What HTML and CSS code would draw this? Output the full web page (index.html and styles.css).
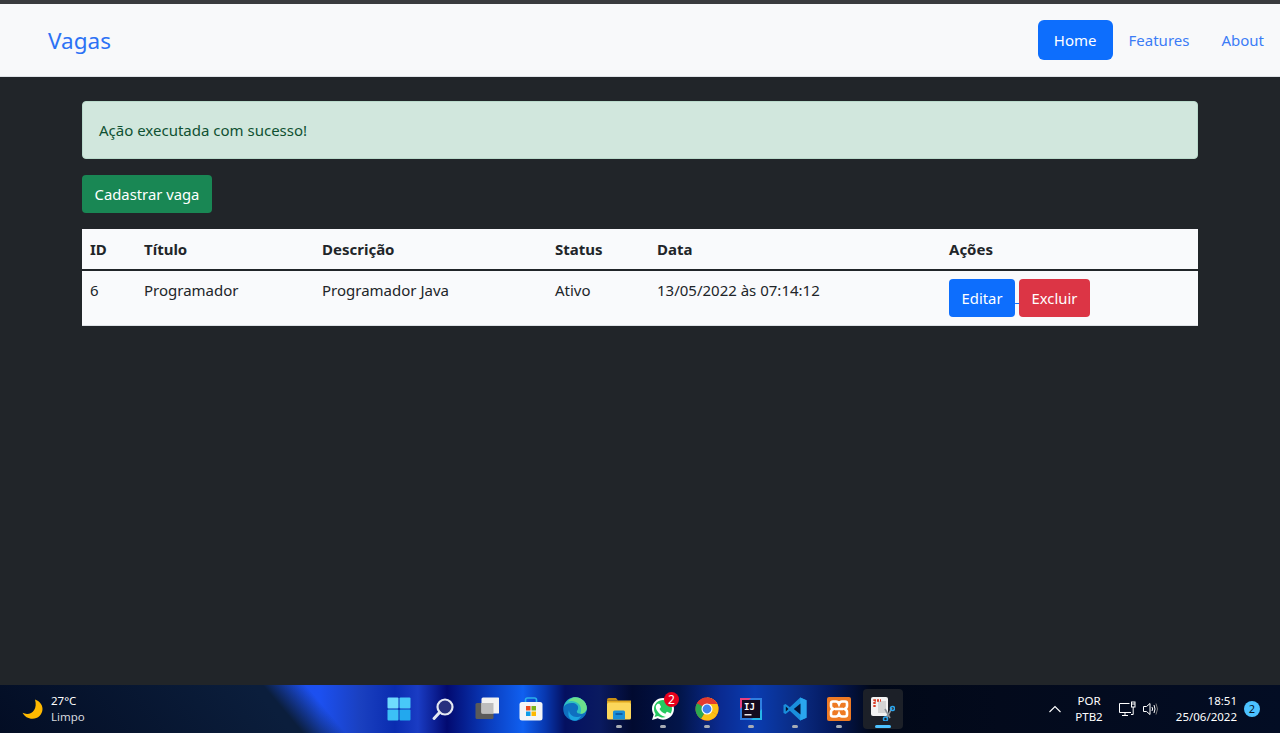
FILE: index.html
```html
<!DOCTYPE html>
<html lang="en">
<head>
  <meta charset="UTF-8" />
  <meta name="viewport" content="width=device-width, initial-scale=1.0">
  <title>Vagas</title>
  <link rel="stylesheet" href="styles.css">
</head>
<body>

<div class="page">
  <!-- Navbar -->
  <nav class="navbar">
    <a class="brand" href="#">Vagas</a>
    <ul class="nav">
      <li><a class="nav-link active" href="#">Home</a></li>
      <li><a class="nav-link" href="#">Features</a></li>
      <li><a class="nav-link" href="#">About</a></li>
    </ul>
  </nav>

  <!-- Content -->
  <main class="container">
    <div class="alert">Ação executada com sucesso!</div>
    <a href="#"><button class="btn btn-success">Cadastrar vaga</button></a>

    <table class="table">
      <colgroup>
        <col class="col-id"><col class="col-title"><col class="col-desc">
        <col class="col-status"><col class="col-date"><col class="col-actions">
      </colgroup>
      <thead>
        <tr>
          <th>ID</th>
          <th>Título</th>
          <th>Descrição</th>
          <th>Status</th>
          <th>Data</th>
          <th>Ações</th>
        </tr>
      </thead>
      <tbody>
        <tr>
          <td>6</td>
          <td>Programador</td>
          <td>Programador Java</td>
          <td>Ativo</td>
          <td>13/05/2022 às 07:14:12</td>
          <td class="cell-actions">
            <a href="#"><button class="btn btn-primary">Editar</button> </a><a href="#"><button class="btn btn-danger">Excluir</button></a>
          </td>
        </tr>
      </tbody>
    </table>
  </main>
</div>

<!-- Taskbar -->
<footer class="taskbar">
  <div class="weather">
    <svg width="24" height="24" viewBox="0 0 24 24">
      <path d="M15 2.500c4.500 1.500 7.500 5 7.500 9.500 0 5.500-4.500 9.800-10 9.800-4.500 0-8-2.300-10-6 1.500.8 3 1.100 4.500 1.100 6 0 10.500-5.500 8-14.400z" fill="#ffb900"/>
    </svg>
    <div class="weather-text">
      <span class="temp">27°C</span>
      <span class="cond">Limpo</span>
    </div>
  </div>

  <div class="apps">
    <div class="app">
      <svg width="24" height="24" viewBox="0 0 24 24">
        <rect x="0.500" y="0.500" width="11" height="11" rx="1" fill="#6fdcfd"/>
        <rect x="12.500" y="0.500" width="11" height="11" rx="1" fill="#48c8f8"/>
        <rect x="0.500" y="12.500" width="11" height="11" rx="1" fill="#3cc0f6"/>
        <rect x="12.500" y="12.500" width="11" height="11" rx="1" fill="#22a8ee"/>
      </svg>
    </div>
    <div class="app">
      <svg width="24" height="24" viewBox="0 0 24 24" fill="none">
        <circle cx="14" cy="10" r="7.500" stroke="#e4e8f2" stroke-width="2.200" fill="#27307e"/>
        <path d="M8.500 15.500L3 21.500" stroke="#e4e8f2" stroke-width="3" stroke-linecap="round"/>
      </svg>
    </div>
    <div class="app">
      <svg width="24" height="24" viewBox="0 0 24 24">
        <rect x="0.500" y="6" width="18" height="16" rx="1.500" fill="#5a5a5a"/>
        <rect x="6.500" y="0.500" width="18" height="16" rx="1.500" fill="#f2f2f2"/>
        <rect x="6.500" y="6" width="12" height="10.500" fill="#bdbdbd"/>
      </svg>
    </div>
    <div class="app">
      <svg width="24" height="24" viewBox="0 0 24 24" fill="none">
        <path d="M6.500 6V3Q6.500 1 8.500 1H15.500Q17.500 1 17.500 3V6" stroke="#2ab0ea" stroke-width="1.600"/>
        <rect x="0.500" y="5" width="23" height="18.500" rx="2.500" fill="#f4f5f7"/>
        <rect x="7" y="9" width="4.500" height="4.500" fill="#ea4a1f"/>
        <rect x="12.500" y="9" width="4.500" height="4.500" fill="#7cb518"/>
        <rect x="7" y="14.500" width="4.500" height="4.500" fill="#0f9de8"/>
        <rect x="12.500" y="14.500" width="4.500" height="4.500" fill="#fdb900"/>
      </svg>
    </div>
    <div class="app">
      <svg width="24" height="24" viewBox="0 0 24 24">
        <circle cx="12" cy="12" r="11.800" fill="#0f6fc0"/>
        <path d="M0.800 10C2 3.800 7 .2 12 .2c6.500 0 11.800 5 11.800 10.800 0 3.500-3 5.800-6.500 5.800-2 0-3.500-.8-3.500-2 0-1.500 1.300-1.300 1.300-3.500C15.500 8 12.500 6 9 6 5 6 2 7.500 .8 10z" fill="#2fc0c0"/>
        <path d="M12 .2c6.500 0 11.800 5 11.800 10.800 0 3.500-3 5.800-6.500 5.800 1.500-3 1-7.500-2-10.300C12.800 4 8 3.200 5 4.500 7 1.800 9.500 .2 12 .2z" fill="#6be08c"/>
        <path d="M6 13c0 4 3.500 7 7.500 7 2 0 3.500-.5 5-1.500-1.800 3-4.300 5.300-6.500 5.300-5 0-8-5-6-10.800z" fill="#1ba3e0"/>
      </svg>
    </div>
    <div class="app">
      <svg width="24" height="24" viewBox="0 0 24 24">
        <path d="M0 3Q0 1 2 1H9L11 3.500H0Z" fill="#c98f12"/>
        <rect x="0" y="3.500" width="24" height="3" fill="#e0a81e"/>
        <rect x="0" y="5.500" width="24" height="17" rx="1.500" fill="#fbd75b"/>
        <path d="M6 22.500V15Q6 13.500 7.500 13.500H16.500Q18 13.500 18 15V22.500Z" fill="#1a8fd8"/>
        <rect x="8.500" y="16" width="7" height="2" fill="#0c5fa8"/>
      </svg>
      <span class="dot"></span>
    </div>
    <div class="app">
      <svg width="24" height="24" viewBox="0 0 24 24">
        <path d="M12 1C5.900 1 1 5.800 1 11.800c0 2.100.6 4.100 1.700 5.800L1 23l5.700-1.700c1.600.9 3.400 1.400 5.300 1.400 6.100 0 11-4.800 11-10.900S18.100 1 12 1z" fill="#fff"/>
        <path d="M12 3C7 3 3 7 3 11.800c0 1.900.6 3.600 1.600 5.100l-1 3.200 3.300-1c1.500.9 3.200 1.500 5.100 1.500 5 0 9-3.900 9-8.800S17 3 12 3z" fill="#25c95f"/>
        <path d="M8.700 7.200c-.3-.5-.6-.5-.9-.5h-.7c-.3 0-.7.100-1 .5-.4.400-1.300 1.200-1.300 3s1.300 3.400 1.500 3.700c.200.200 2.600 4 6.300 5.400 3.100 1.200 3.700 1 4.400.9.700-.1 2.200-.9 2.500-1.800.3-.9.3-1.600.2-1.800-.1-.2-.3-.3-.7-.5l-2.500-1.200c-.3-.1-.6-.2-.8.200-.3.400-1 1.200-1.200 1.400-.2.200-.4.300-.8.100-.4-.2-1.600-.6-3-1.800-1.100-1-1.800-2.200-2-2.500-.2-.4 0-.6.200-.8l.6-.7c.2-.2.2-.4.400-.6.100-.3.100-.5 0-.7L8.700 7.200z" fill="#fff"/>
      </svg>
      <span class="badge">2</span>
      <span class="dot"></span>
    </div>
    <div class="app">
      <svg width="24" height="24" viewBox="0 0 24 24">
        <circle cx="12" cy="12" r="11.500" fill="#e33b2e"/>
        <path d="M12 12L22 17.800A11.500 11.500 0 0 1 6 21.800Z" fill="#fbc116"/>
        <path d="M12 12L6 21.800A11.500 11.500 0 0 1 2 6.200Z" fill="#2da94f"/>
        <path d="M12 .5A11.500 11.500 0 0 1 23.500 12 11.500 11.500 0 0 1 22 17.800L12 12Z" fill="#fbc116"/>
        <path d="M2 6.200A11.500 11.500 0 0 1 12 .5 11.500 11.500 0 0 1 22.400 7H12Z" fill="#e33b2e"/>
        <circle cx="12" cy="12" r="5.500" fill="#fff"/>
        <circle cx="12" cy="12" r="4.400" fill="#3f82ee"/>
      </svg>
      <span class="dot"></span>
    </div>
    <div class="app">
      <svg width="24" height="24" viewBox="0 0 24 24">
        <rect x="1" y="1" width="22" height="22" fill="#2f7fe0"/>
        <path d="M1 1H12L1 12Z" fill="#e8407e"/>
        <path d="M23 23H12L23 12Z" fill="#27b6e8"/>
        <rect x="3" y="3" width="18" height="18" fill="#140a1e"/>
        <rect x="5.500" y="17" width="7" height="1.500" fill="#e8e8e8"/>
        <text class="ij" x="5" y="13">IJ</text>
      </svg>
      <span class="dot"></span>
    </div>
    <div class="app">
      <svg width="24" height="24" viewBox="0 0 24 24">
        <path d="M17.200 0.500L23.500 3.300V20.700L17.200 23.500 6.800 13.800 2.600 17 .5 15.900V8.100L2.600 7 6.800 10.200Z" fill="#1a8fdc"/>
        <path d="M2.800 9.400V14.600L5.500 12Z" fill="#04102c"/>
        <path d="M17.200 0.500L23.500 3.300V20.700L17.200 23.500Z" fill="#2aa6ee"/>
        <path d="M17.500 6.500L10.800 12 17.500 17.500Z" fill="#04143a"/>
      </svg>
      <span class="dot"></span>
    </div>
    <div class="app">
      <svg width="24" height="24" viewBox="0 0 24 24" fill="none">
        <rect x="0" y="0" width="24" height="24" rx="2" fill="#ee7a24"/>
        <path d="M6 4.500H9Q11 4.500 12 7 13 4.500 15 4.500H18Q20 4.500 20 6.500V9Q20 11 17.500 12 20 13 20 15V17.500Q20 19.500 18 19.500H15Q13 19.500 12 17 11 19.500 9 19.500H6Q4 19.500 4 17.500V15Q4 13 6.500 12 4 11 4 9V6.500Q4 4.500 6 4.500Z" stroke="#fff" stroke-width="2.600"/>
        <path d="M8 12H16" stroke="#fff" stroke-width="2.600"/>
      </svg>
      <span class="dot"></span>
    </div>
    <div class="app app-active">
      <svg width="24" height="24" viewBox="0 0 24 24" fill="none">
        <rect x="0" y="0" width="17" height="19" rx="2" fill="#f2f2f2"/>
        <rect x="7" y="4" width="8" height="12" fill="#d4d4d4"/>
        <path d="M3.500 10V3.500H10" stroke="#d9402a" stroke-width="2.400" stroke-dasharray="2 1"/>
        <path d="M14 12L19 21M21 11L15.500 21" stroke="#8a9096" stroke-width="1.600"/>
        <circle cx="21.500" cy="11.500" r="2" stroke="#2aa6ee" stroke-width="1.500"/>
        <circle cx="14.500" cy="22" r="2" stroke="#2aa6ee" stroke-width="1.500"/>
      </svg>
      <span class="dot"></span>
    </div>
  </div>

  <div class="tray">
    <svg class="chevron" width="12" height="8" viewBox="0 0 12 8" fill="none">
      <path d="M.5 7L6 1.500 11.500 7" stroke="#fff" stroke-width="1.100"/>
    </svg>
    <div class="lang"><span>POR</span><span>PTB2</span></div>
    <svg class="net" width="17" height="17" viewBox="0 0 17 17" fill="none" stroke="#fff" stroke-width="1">
      <path d="M10.500 2.500H.5V11.500H12M6 11.500V14.500M3 14.500H9"/>
      <rect x="12.500" y="1" width="3.500" height="5"/>
      <path d="M12.500 3H16M14.200 6V13.500H12"/>
    </svg>
    <svg class="sound" width="16" height="16" viewBox="0 0 16 16" fill="none" stroke="#fff" stroke-width="1">
      <path d="M.5 5.500H3.500L7 2.500V13.500L3.500 10.500H.5Z"/>
      <path d="M9 6Q10.200 8 9 10M11 4Q13 8 11 12"/>
      <path d="M13 2.500Q16 8 13 13.500" stroke="#777"/>
    </svg>
    <div class="clock"><span>18:51</span><span>25/06/2022</span></div>
    <span class="notify">2</span>
  </div>
</footer>

</body>
</html>
```
FILE: styles.css
```css
* {
  box-sizing: border-box;
}

html, body {
  height: 100%;
}

body {
  margin: 0;
  display: flex;
  flex-direction: column;
  overflow: hidden;
  font-family: "Noto Sans", "Open Sans", sans-serif;
  font-size: 15px;
  line-height: 24px;
  color: #212529;
  background: #212529;
}

a {
  color: #0d6efd;
}

/* Page */
.page {
  flex: 1;
  border-top: 4px solid #3a3b3e;
}

.navbar {
  height: 73px;
  display: flex;
  justify-content: space-between;
  align-items: center;
  padding-left: 48px;
  background: #f8f9fa;
  border-bottom: 1px solid #dee2e6;
}

.brand {
  padding-top: 2px;
  font-size: 22.500px;
  color: #2c72f5;
  text-decoration: none;
}

.nav {
  display: flex;
  list-style: none;
  margin: 0;
  padding: 0;
}

.nav-link {
  display: block;
  padding: 8px 16px;
  border-radius: 6px;
  color: #3b7cf6;
  text-decoration: none;
}

.nav-link.active {
  background: #0d6efd;
  color: #fff;
}

.container {
  width: 1140px;
  margin: 0 auto;
  padding: 24px 12px 0;
}

.alert {
  height: 58px;
  padding: 16px;
  margin-bottom: 16px;
  background: #d1e7dd;
  border: 1px solid #badbcc;
  border-radius: 4px;
  color: #0f5132;
}

.btn {
  height: 38px;
  padding: 0 11.600px;
  border: 1px solid transparent;
  border-radius: 4px;
  font: inherit;
  font-size: 14.800px;
  color: #fff;
  vertical-align: middle;
  cursor: pointer;
}

.btn-success { background: #198754; }
.btn-primary { background: #0d6efd; }
.btn-danger { background: #dc3545; }

.table {
  width: 1116px;
  margin-top: 16px;
  border-collapse: collapse;
  table-layout: fixed;
  background: #f9fafc;
}

.col-id { width: 54px; }
.col-title { width: 178px; }
.col-desc { width: 233px; }
.col-status { width: 102px; }
.col-date { width: 292px; }
.col-actions { width: 257px; }

.table th {
  height: 41px;
  padding: 7px 8px 8px;
  text-align: left;
  font-weight: 700;
  border-bottom: 2px solid #212529;
}

.table td {
  height: 55px;
  padding: 7px 8px;
  vertical-align: top;
  border-bottom: 1px solid #dee2e6;
}

.table .cell-actions {
  padding-top: 8px;
}

/* Taskbar */
.taskbar {
  height: 48px;
  flex: none;
  display: flex;
  justify-content: space-between;
  align-items: center;
  color: #fff;
  font-size: 11.500px;
  line-height: 16px;
  background:
    linear-gradient(50deg, #030d24 0, #0b1e3c 225px, #0b1e3c 232px, transparent 265px),
    linear-gradient(90deg,
      #1a48e0 0, #1c50f0 320px, #1a40c0 360px,
      #0a2cb0 395px, #1a3cc4 418px, #020a70 447px, #0a3ec0 490px,
      #1060f0 523px, #0838b0 545px, #041060 565px, #0a1a60 600px, #010a30 632px,
      #02154a 680px, #0a2a90 720px, #0a3cb0 755px, #0a2a80 800px, #041a60 830px,
      #010818 872px, #030a1c 1000px, #030d24 1280px);
}

.weather {
  display: flex;
  align-items: center;
  gap: 7px;
  padding-left: 20px;
  width: 300px;
}

.weather-text span {
  display: block;
}

.cond {
  color: #d6d9df;
}

.apps {
  display: flex;
  position: absolute;
  left: 377px;
}

.app {
  position: relative;
  width: 44px;
  height: 48px;
  display: flex;
  align-items: center;
  justify-content: center;
}

.app-active::before {
  content: "";
  position: absolute;
  left: 2px;
  top: 4px;
  width: 40px;
  height: 40px;
  background: #1c2028;
  border-radius: 4px;
}

.app svg {
  position: relative;
}

.ij {
  font: 700 9px "DejaVu Sans Mono", monospace;
  fill: #fff;
}

.dot {
  position: absolute;
  left: 19px;
  bottom: 5px;
  width: 6px;
  height: 3px;
  border-radius: 2px;
  background: #a7acb5;
}

.app-active .dot {
  left: 14px;
  width: 16px;
  height: 3px;
  background: #4cc2ff;
}

.badge {
  position: absolute;
  left: 23px;
  top: 7px;
  width: 15px;
  height: 15px;
  border-radius: 50%;
  background: #e8001c;
  text-align: center;
  font-size: 12px;
  line-height: 15px;
}

.tray {
  display: flex;
  align-items: center;
  padding-right: 20px;
}

.chevron {
  margin-right: 9px;
}

.lang {
  width: 38px;
  margin-right: 11px;
  text-align: center;
}

.lang span,
.clock span {
  display: block;
}

.net {
  margin-right: 7px;
}

.clock {
  width: 70px;
  margin: 0 7px 0 8px;
  text-align: right;
}

.notify {
  width: 16px;
  height: 16px;
  border-radius: 50%;
  background: #4cc2ff;
  color: #06121f;
  text-align: center;
  font-size: 11px;
  line-height: 16px;
}
```
